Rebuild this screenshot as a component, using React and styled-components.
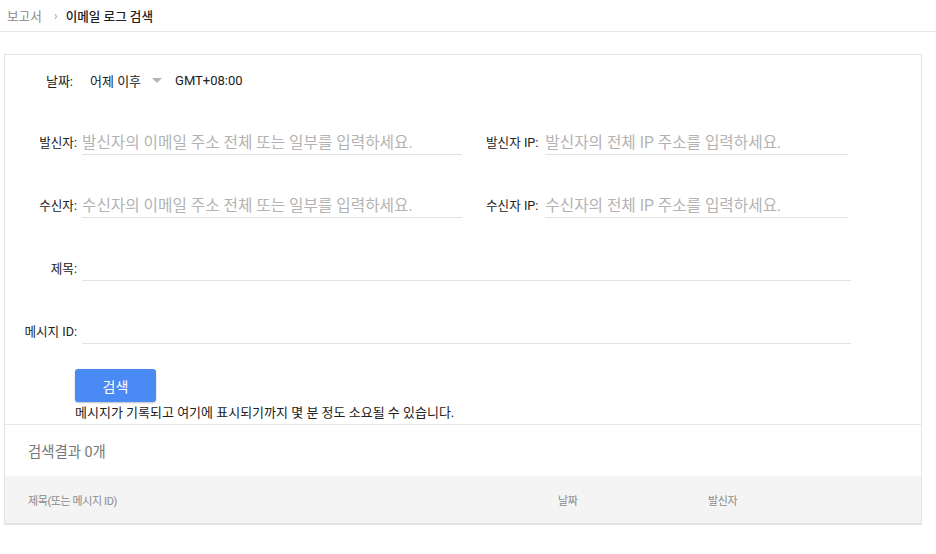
import React from "react";
import styled, {createGlobalStyle} from "styled-components";

const GlobalStyle = createGlobalStyle`
  html, body {
    margin: 0;
    padding: 0;
    background: #fff;
  }

  body {
    font-family: Roboto, "Noto Sans CJK KR", sans-serif;
    color: #212121;
  }
`;

const App = () => {
  return (
    <>
      <GlobalStyle/>
      <Header>
        <Crumb>보고서</Crumb>
        <Chevron>›</Chevron>
        <Current>이메일 로그 검색</Current>
      </Header>
      <Card>
        <DateRow>
          <DateLabel>날짜:</DateLabel>
          <DateValue>어제 이후</DateValue>
          <Caret/>
          <Zone>GMT+08:00</Zone>
        </DateRow>
        <Fields>
          <FieldRow>
            <Label>발신자:</Label>
            <Input width={380} placeholder="발신자의 이메일 주소 전체 또는 일부를 입력하세요."/>
            <SideLabel>발신자 IP:</SideLabel>
            <Input width={303} placeholder="발신자의 전체 IP 주소를 입력하세요."/>
          </FieldRow>
          <FieldRow>
            <Label>수신자:</Label>
            <Input width={380} placeholder="수신자의 이메일 주소 전체 또는 일부를 입력하세요."/>
            <SideLabel>수신자 IP:</SideLabel>
            <Input width={303} placeholder="수신자의 전체 IP 주소를 입력하세요."/>
          </FieldRow>
          <FieldRow>
            <Label>제목:</Label>
            <Input width={769}/>
          </FieldRow>
          <FieldRow>
            <Label>메시지 ID:</Label>
            <Input width={769}/>
          </FieldRow>
        </Fields>
        <Actions>
          <SearchButton type="button">검색</SearchButton>
          <Note>메시지가 기록되고 여기에 표시되기까지 몇 분 정도 소요될 수 있습니다.</Note>
        </Actions>
        <ResultCount>검색결과 0개</ResultCount>
        <TableHead>
          <HeadCell width={530}>제목(또는 메시지 ID)</HeadCell>
          <HeadCell width={150}>날짜</HeadCell>
          <HeadCell>발신자</HeadCell>
        </TableHead>
      </Card>
    </>
  );
};

const Header = styled.div`
  display: flex;
  align-items: center;
  height: 31px;
  padding: 0 7px;
  border-bottom: 1px solid #e6e6e6;
  font-size: 12.6px;
`;

const Crumb = styled.span`
  color: #8a8a8a;
`;

const Chevron = styled.span`
  color: #a0a0a0;
  font-size: 13px;
  margin: 0 8px 0 12px;
`;

const Current = styled.span`
  color: #212121;
  font-weight: 500;
`;

const Card = styled.div`
  width: 916px;
  margin: 22px 0 0 4px;
  border: 1px solid #e4e4e4;
  border-bottom: 0;
  background: #fff;
`;

const DateRow = styled.div`
  display: flex;
  align-items: center;
  height: 51px;
  font-size: 13px;
`;

const DateLabel = styled.span`
  width: 68px;
  flex: none;
  text-align: right;
  color: #212121;
`;

const DateValue = styled.span`
  margin-left: 17px;
  color: #212121;
`;

const Caret = styled.span`
  width: 0;
  height: 0;
  margin: 0 0 0 11px;
  border-left: 5px solid transparent;
  border-right: 5px solid transparent;
  border-top: 5px solid #b5b5b5;
`;

const Zone = styled.span`
  margin-left: 13px;
  color: #212121;
`;

const Fields = styled.div`
  display: flex;
  flex-direction: column;
  gap: 39px;
  margin-top: 25px;
`;

const FieldRow = styled.div`
  display: flex;
  align-items: flex-end;
  height: 24px;
`;

const Label = styled.label`
  width: 72px;
  flex: none;
  margin-right: 5px;
  padding-bottom: 4px;
  text-align: right;
  font-size: 12.6px;
  color: #212121;
  white-space: nowrap;
`;

const SideLabel = styled(Label)`
  width: auto;
  margin: 0 7px 0 24px;
`;

const Input = styled.input`
  width: ${p => p.width}px;
  flex: none;
  box-sizing: border-box;
  height: 24px;
  padding: 0 0 1px;
  border: 0;
  border-bottom: 1px solid #e2e2e2;
  outline: 0;
  background: transparent;
  font-family: Roboto, "Noto Sans CJK KR", sans-serif;
  font-size: 15.7px;
  color: #212121;

  &::placeholder {
    color: #b3b3b3;
  }
`;

const Actions = styled.div`
  display: flex;
  flex-direction: column;
  align-items: flex-start;
  padding: 25px 0 3px 70px;
  border-bottom: 1px solid #e6e6e6;
`;

const SearchButton = styled.button`
  width: 81px;
  height: 33px;
  border: 0;
  border-radius: 3px;
  background: #4a8af4;
  box-shadow: 0 1px 2px rgba(0, 0, 0, 0.25);
  color: #fff;
  font-family: Roboto, "Noto Sans CJK KR", sans-serif;
  font-size: 14px;
  cursor: pointer;
`;

const Note = styled.div`
  margin-top: 3px;
  font-size: 13px;
  line-height: 16px;
  color: #212121;
`;

const ResultCount = styled.div`
  display: flex;
  align-items: center;
  height: 51px;
  padding-left: 23px;
  font-size: 14.4px;
  color: #777;
`;

const TableHead = styled.div`
  display: flex;
  align-items: center;
  height: 47px;
  padding-left: 23px;
  background: #f4f4f4;
  border-bottom: 2px solid #e2e2e2;
`;

const HeadCell = styled.div`
  width: ${p => (p.width ? `${p.width}px` : "auto")};
  font-size: 11px;
  color: #8a8a8a;
  letter-spacing: -0.4px;
`;

export default App;
